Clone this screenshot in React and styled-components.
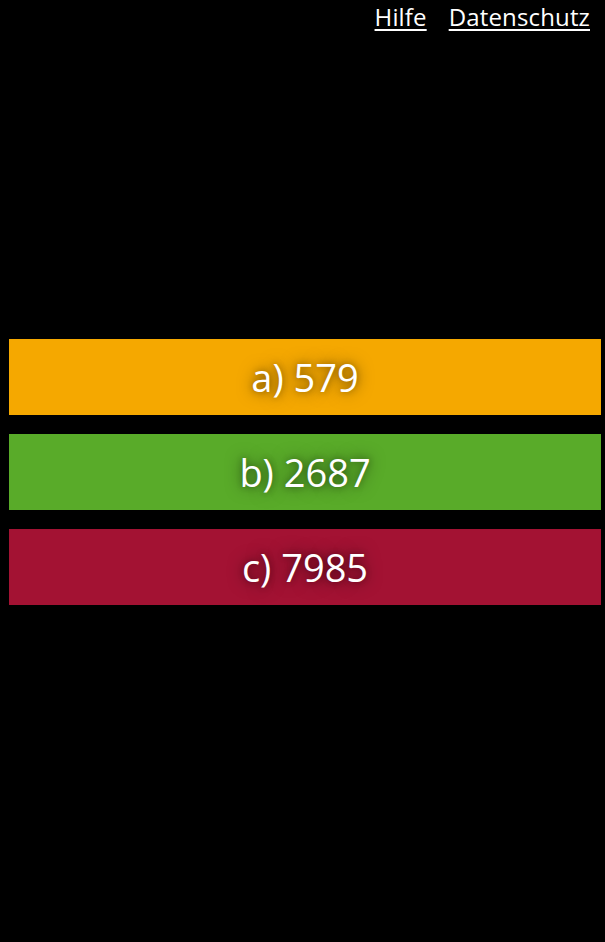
import React from "react";
import styled, { createGlobalStyle } from "styled-components";

const GlobalStyle = createGlobalStyle`
  html, body {
    margin: 0;
    padding: 0;
    background: #000;
    font-family: "Open Sans", "Liberation Sans", sans-serif;
  }
`;

const answers = [
  { id: "a", label: "a) 579", color: "#f5a800" },
  { id: "b", label: "b) 2687", color: "#59ab29" },
  { id: "c", label: "c) 7985", color: "#a31233" },
];

const Page = styled.div`
  height: 942px;
  display: grid;
  grid-template-rows: 41px 1fr 39px;
  background: #000;
`;

const TopNav = styled.nav`
  display: flex;
  justify-content: flex-end;
  align-items: flex-start;
  gap: 22px;
  padding: 0 15px 0 0;
`;

const NavLink = styled.a`
  color: #fff;
  font-size: 24px;
  line-height: 34px;
  letter-spacing: 0.15px;
  text-decoration: underline;
  text-underline-offset: 3px;
  text-decoration-thickness: 2px;
  cursor: pointer;
`;

const Answers = styled.main`
  display: flex;
  flex-direction: column;
  justify-content: center;
  gap: 19px;
  padding: 0 4px 0 9px;
`;

const AnswerButton = styled.button`
  height: 76px;
  width: 100%;
  border: none;
  margin: 0;
  background: ${(p) => p.$color};
  color: #fff;
  font-family: "Open Sans", "Liberation Sans", sans-serif;
  font-size: 38px;
  line-height: 74px;
  padding: 0;
  text-shadow: 0 0 16px rgba(0, 0, 0, 0.6), 0 0 6px rgba(0, 0, 0, 0.3);
  cursor: pointer;
`;

const App = () => {
  return (
    <>
      <GlobalStyle />
      <Page>
        <TopNav>
          <NavLink>Hilfe</NavLink>
          <NavLink>Datenschutz</NavLink>
        </TopNav>
        <Answers>
          {answers.map((a) => (
            <AnswerButton key={a.id} $color={a.color}>
              {a.label}
            </AnswerButton>
          ))}
        </Answers>
        <div />
      </Page>
    </>
  );
};

export default App;
